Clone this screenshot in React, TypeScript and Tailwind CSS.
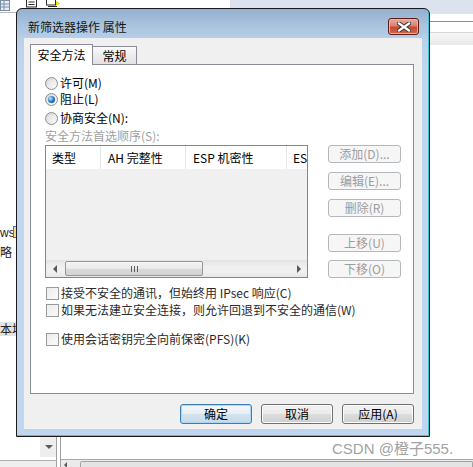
import React from "react";

const cjk = "font-['Noto_Sans_CJK_SC','Noto_Sans',sans-serif]";

function Radio({ checked = false, children }: { checked?: boolean; children: React.ReactNode }) {
  return (
    <div className="flex h-4 items-center">
      <span className="flex h-[13px] w-[13px] items-center justify-center rounded-full border border-[#8e8f8f] bg-[linear-gradient(135deg,#d4d4d4,#fbfbfb)]">
        {checked ? (
          <span className="h-[7px] w-[7px] rounded-full bg-[radial-gradient(circle_at_35%_35%,#b4e8ff,#1b74c4_55%,#0a4682)]" />
        ) : (
          <span className="h-[7px] w-[7px] rounded-full bg-[linear-gradient(135deg,#e2e2e2,#f8f8f8)]" />
        )}
      </span>
      <span className="ml-[2px] leading-4">{children}</span>
    </div>
  );
}

function Check({ children, className = "" }: { children: React.ReactNode; className?: string }) {
  return (
    <div className={`flex h-4 items-center ${className}`}>
      <span className="ml-px h-[13px] w-[13px] border border-[#9a9a9a] bg-[linear-gradient(135deg,#ececec,#fbfbfb)]" />
      <span className="ml-[2px] leading-4 text-[#2a2a2a]">{children}</span>
    </div>
  );
}

function SideButton({ children, className = "" }: { children: React.ReactNode; className?: string }) {
  return (
    <div
      className={`flex h-[18px] w-[73px] items-center justify-center rounded-[3px] border border-[#b5b8bb] bg-[#f6f6f6] leading-none text-[#9c9c9c] ${className}`}
    >
      {children}
    </div>
  );
}

function DlgButton({ children, primary = false }: { children: React.ReactNode; primary?: boolean }) {
  return (
    <div
      className={`flex h-[20px] w-[72px] items-center justify-center rounded-[3px] border leading-none text-black ${
        primary
          ? "border-[#3c7fb1] bg-[linear-gradient(to_bottom,#f4f8fb_0%,#e5eef5_50%,#d3e2ee_51%,#c8dbea_100%)] shadow-[inset_0_0_0_1px_#a9d6f2]"
          : "border-[#707070] bg-[linear-gradient(to_bottom,#f2f2f2_0%,#ebebeb_50%,#dddddd_51%,#cfcfcf_100%)] shadow-[inset_0_0_0_1px_#fcfcfc]"
      }`}
    >
      {children}
    </div>
  );
}

function CloseButton() {
  return (
    <div className="flex h-[17px] w-[31px] items-center justify-center rounded-[3px] border border-[#5e1d16] bg-[linear-gradient(to_bottom,#e7aa9a_0%,#d98470_45%,#c6492f_55%,#d0674c_100%)] shadow-[inset_0_0_0_1px_#eab3a5]">
      <svg width="14" height="10" viewBox="0 0 14 10">
        <path d="M2 1.5 L12 8.5 M12 1.5 L2 8.5" stroke="#3b3b3b" strokeWidth="4.2" strokeLinecap="square" />
        <path d="M2 1.5 L12 8.5 M12 1.5 L2 8.5" stroke="#ffffff" strokeWidth="2.2" strokeLinecap="square" />
      </svg>
    </div>
  );
}

function HScroll() {
  return (
    <div className="flex h-[17px] shrink-0 items-center bg-[linear-gradient(to_bottom,#e3e3e3,#f0f0f0_40%,#f0f0f0_70%,#e6e6e6)]">
      <div className="flex h-full w-[17px] items-center justify-center">
        <span className="h-0 w-0 border-y-[4px] border-r-[4px] border-y-transparent border-r-[#5a5a5a]" />
      </div>
      <div className="ml-[2px] flex h-[15px] w-[138px] items-center justify-center rounded-[2px] border border-[#979797] bg-[linear-gradient(to_bottom,#f5f5f5,#e9e9e9_50%,#dadada_51%,#d3d3d3)]">
        <div className="flex gap-[2px]">
          <span className="h-[6px] w-px bg-[#5e5e5e]" />
          <span className="h-[6px] w-px bg-[#5e5e5e]" />
          <span className="h-[6px] w-px bg-[#5e5e5e]" />
        </div>
      </div>
      <div className="flex-1" />
      <div className="flex h-full w-[17px] items-center justify-center">
        <span className="h-0 w-0 border-y-[4px] border-l-[4px] border-y-transparent border-l-[#5a5a5a]" />
      </div>
    </div>
  );
}

function ListView() {
  return (
    <div className="flex h-[133px] w-[263px] flex-col overflow-hidden border border-[#828790] bg-[#f0f0f0]">
      <div className="flex h-[23px] shrink-0 items-center overflow-hidden whitespace-nowrap bg-white leading-none">
        <div className="flex h-full w-[55px] shrink-0 items-center border-r border-[#e3e5e8] pl-[6px]">类型</div>
        <div className="flex h-full w-[85px] shrink-0 items-center border-r border-[#e3e5e8] pl-[7px]">AH 完整性</div>
        <div className="flex h-full w-[101px] shrink-0 items-center border-r border-[#e3e5e8] pl-[7px]">ESP 机密性</div>
        <div className="flex h-full min-w-0 flex-1 items-center overflow-hidden pl-[6px]">ESP</div>
      </div>
      <div className="flex-1" />
      <HScroll />
    </div>
  );
}

function Dialog() {
  return (
    <div className="absolute left-[16px] top-[8px] flex h-[429px] w-[414px] flex-col rounded-t-[6px] border border-[#1b1b1b] bg-[linear-gradient(to_bottom,#93b0cf_0px,#a9c3de_16px,#bad1ea_32px,#bfd6ee_60px,#bfd6ee_100%)] shadow-[inset_-1px_-1px_0_#3fc6dc]">
      <div className="flex h-[29px] shrink-0 items-center justify-between pl-[11px] pr-[10px] pt-[6px]">
        <span className="leading-none text-[#151515]">新筛选器操作 属性</span>
        <CloseButton />
      </div>

      <div className="mx-[7px] flex h-[391px] shrink-0 flex-col bg-[#f0f0f0] pl-[6px] pr-[8px] pt-[6px]">
        <div className="flex h-[20px] shrink-0 items-end">
          <div className="relative z-10 -mb-px flex h-[21px] w-[63px] items-center justify-center border border-b-0 border-[#898c95] bg-white leading-none">
            安全方法
          </div>
          <div className="flex h-[18px] w-[44px] items-center justify-center border-r border-t border-[#898c95] bg-[linear-gradient(to_bottom,#fbfbfb,#ececec_50%,#e2e2e2)] leading-none">
            常规
          </div>
        </div>

        <div className="flex h-[330px] shrink-0 flex-col border border-[#898c95] bg-white pl-[14px] pt-[10px]">
          <Radio>许可(M)</Radio>
          <Radio checked>阻止(L)</Radio>
          <div className="mt-[3px]">
            <Radio>协商安全(N):</Radio>
          </div>
          <div className="mt-[2px] h-4 leading-4 text-[#a0a0a0]">安全方法首选顺序(S):</div>

          <div className="mt-px flex">
            <ListView />
            <div className="ml-[20px] flex flex-col">
              <SideButton>添加(D)...</SideButton>
              <SideButton className="mt-[9px]">编辑(E)...</SideButton>
              <SideButton className="mt-[9px]">删除(R)</SideButton>
              <SideButton className="mt-[17px]">上移(U)</SideButton>
              <SideButton className="mt-[8px]">下移(O)</SideButton>
            </div>
          </div>

          <Check className="mt-[7px]">接受不安全的通讯，但始终用 IPsec 响应(C)</Check>
          <Check className="mt-px">如果无法建立安全连接，则允许回退到不安全的通信(W)</Check>
          <Check className="mt-[13px]">使用会话密钥完全向前保密(PFS)(K)</Check>
        </div>

        <div className="mt-[10px] flex justify-end gap-[9px]">
          <DlgButton primary>确定</DlgButton>
          <DlgButton>取消</DlgButton>
          <DlgButton>应用(A)</DlgButton>
        </div>
      </div>
    </div>
  );
}

export default function App() {
  return (
    <div className={`relative h-[467px] w-[473px] overflow-hidden bg-white text-[12px] text-black ${cjk}`}>
      {/* console window behind the dialog */}
      <div className="absolute left-[230px] top-0 h-[14px] w-[243px] bg-[#dde2ef]" />
      <div className="absolute left-0 top-[12px] h-px w-[20px] bg-[#b9b9b9]" />
      <div className="absolute left-[430px] top-[21px] h-px w-[43px] bg-[#8e8e8e]" />
      <div className="absolute left-[430px] top-[32px] h-[13px] w-[43px] border-t border-[#d6d6d6] bg-[linear-gradient(to_bottom,#f7f7f7,#e8e8e8)]" />

      <svg className="absolute left-0 top-0" width="11" height="11" viewBox="0 0 11 11">
        <rect x="0.5" y="0.5" width="9" height="10" fill="#e9eef6" stroke="#7d8ea3" />
        <path d="M1 4 H10 M1 7 H10 M4 1 V10" stroke="#7d8ea3" />
      </svg>
      <svg className="absolute left-[25px] top-0" width="14" height="8" viewBox="0 0 14 8">
        <rect x="1.5" y="-1" width="10" height="8" fill="#fff" stroke="#2b2b2b" />
        <path d="M3.5 2 H9.5 M3.5 4.5 H9.5" stroke="#2b2b2b" />
      </svg>
      <svg className="absolute left-[45px] top-0" width="17" height="8" viewBox="0 0 17 8">
        <rect x="1.5" y="-1" width="9" height="6" fill="#fff" stroke="#2b2b2b" />
        <path d="M3 6.5 H12" stroke="#2b2b2b" />
        <path d="M11 1 L15 3.5 L11 6 Z" fill="#f2d800" />
      </svg>

      <div className="absolute left-0 top-[226px] font-['Liberation_Sans',sans-serif] text-[12px] leading-[14px] text-[#222]">
        ws
      </div>
      <div className="absolute left-[13px] top-[226px] h-[12px] w-[6px] border border-[#3a78c8] bg-[#f6d98a]" />
      <div className="absolute left-0 top-[245px] leading-[14px] text-[#222]">略</div>
      <div className="absolute left-0 top-[322px] h-[14px] w-[20px] whitespace-nowrap bg-[#e2e2e2] leading-[14px] text-[#222]">
        本地
      </div>

      {/* bottom of console window */}
      <div className="absolute left-[40px] top-[437px] flex h-[20px] w-[17px] items-center justify-center bg-[#eeeeee]">
        <span className="h-0 w-0 border-x-[4px] border-t-[4px] border-x-transparent border-t-[#5a5a5a]" />
      </div>
      <div className="absolute left-[56px] top-[437px] h-[30px] w-px bg-[#a0a0a0]" />
      <div className="absolute left-[60px] top-[437px] h-[30px] w-px bg-[#a0a0a0]" />
      <div className="absolute left-0 top-[460px] h-[7px] w-[56px] border-t border-[#b0b0b0] bg-[#efefef]" />
      <div className="absolute left-[61px] top-[459px] h-[8px] w-[412px] border-t border-[#a7a7a7] bg-[#ebebeb]" />
      <div className="absolute left-[64px] top-[462px] h-0 w-0 border-y-[3px] border-r-[3px] border-y-transparent border-r-[#5a5a5a]" />
      <div className="absolute left-[80px] top-[461px] h-[6px] w-[393px] rounded-t-[2px] border border-b-0 border-[#a3a3a3] bg-[#e4e4e4]" />

      <Dialog />

      <div className="absolute left-[332px] top-[440px] whitespace-nowrap font-['Liberation_Sans','Noto_Sans_CJK_SC',sans-serif] text-[15px] leading-[18px] text-[#a2a2a2]">
        CSDN @橙子555.
      </div>
    </div>
  );
}
